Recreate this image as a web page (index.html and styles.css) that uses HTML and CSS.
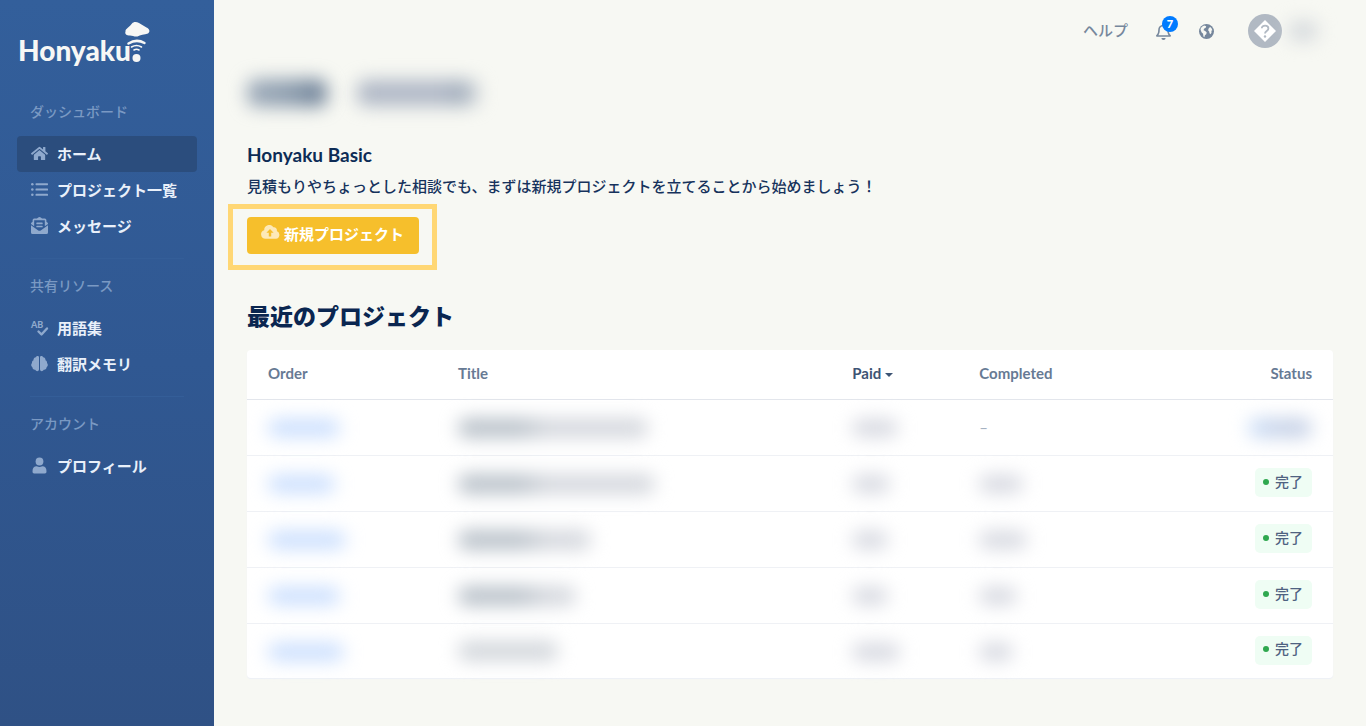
FILE: index.html
```html
<!DOCTYPE html>
<html lang="ja">
<head>
  <meta charset="UTF-8">
  <meta name="viewport" content="width=device-width, initial-scale=1.0">
  <title>Honyaku</title>
  <link rel="stylesheet" href="styles.css">
</head>
<body>
  <aside class="sidebar">
    <a class="logo" href="#" aria-label="Honyaku">
      <svg width="134" height="50" viewBox="0 0 134 50" fill="#f7f7f5">
        <text class="logo-text" x="-1" y="41">Honyaku</text>
        <path d="M106.500 11.500C106 9 111 6.500 113 3.500C114.500 1.500 117.500 1.500 120 3L127.500 7.500C130.500 8.500 131.500 12 129 13.500C125.500 14.500 121 15 118.500 16.500C115.500 17 113.500 15.500 111 15.500C107.500 15.500 105.500 14 106.500 11.500Z"/>
        <path d="M109.500 23.500Q117.500 18.500 125.500 23" fill="none" stroke="#f7f7f5" stroke-width="2.500" stroke-linecap="round"/>
        <path d="M112.500 27Q117.500 24 122.500 27" fill="none" stroke="#f7f7f5" stroke-width="1.500" stroke-linecap="round"/>
        <path d="M115 30Q117.500 28.500 120 30" fill="none" stroke="#f7f7f5" stroke-width="1.500" stroke-linecap="round"/>
        <circle cx="117.500" cy="38" r="4"/>
      </svg>
    </a>

    <nav class="nav">
      <div class="nav-section">
        <p class="nav-title">ダッシュボード</p>
        <a class="nav-link active" href="#">
          <svg class="icon" viewBox="0 0 576 512"><path d="M280.400 148.300L96 300.100V464a16 16 0 0 0 16 16l112-.3a16 16 0 0 0 15.900-16V368a16 16 0 0 1 16-16h64a16 16 0 0 1 16 16v95.600a16 16 0 0 0 16 16.100l112 .3a16 16 0 0 0 16-16V300L295.700 148.300a12.200 12.200 0 0 0-15.300 0zM571.600 251.500L488 182.600V44a12 12 0 0 0-12-12h-56a12 12 0 0 0-12 12v72.600L318.500 43a48 48 0 0 0-61 0L4.300 251.500a12 12 0 0 0-1.600 16.900l25.500 31a12 12 0 0 0 16.900 1.600L280.400 107.200a12.200 12.200 0 0 1 15.300 0L531 301a12 12 0 0 0 16.900-1.600l25.500-31a12 12 0 0 0-1.800-16.900z"/></svg>
          ホーム
        </a>
        <a class="nav-link" href="#">
          <svg class="icon" viewBox="0 0 512 512"><circle cx="40" cy="96" r="38"/><circle cx="40" cy="256" r="38"/><circle cx="40" cy="416" r="38"/><rect x="136" y="66" width="376" height="60" rx="18"/><rect x="136" y="226" width="376" height="60" rx="18"/><rect x="136" y="386" width="376" height="60" rx="18"/></svg>
          プロジェクト一覧
        </a>
        <a class="nav-link" href="#">
          <svg class="icon" viewBox="0 0 512 512"><path d="M176 216h160a16 16 0 0 0 16-16v-16a16 16 0 0 0-16-16H176a16 16 0 0 0-16 16v16a16 16 0 0 0 16 16zm-16 80a16 16 0 0 0 16 16h160a16 16 0 0 0 16-16v-16a16 16 0 0 0-16-16H176a16 16 0 0 0-16 16zm96 121.100c-16.400 0-32.800-5.100-46.900-15.200L0 250.900V464a48 48 0 0 0 48 48h416a48 48 0 0 0 48-48V250.900L302.900 401.900c-14 10.100-30.400 15.200-46.900 15.200zM493.600 163c-8.800-6.900-17.200-13.500-29.600-22.800V96a48 48 0 0 0-48-48h-77.600C321 34.800 288.300 0 256 0s-65 34.800-82.400 48H96a48 48 0 0 0-48 48v44.200C35.600 149.500 27.200 156 18.400 163A48 48 0 0 0 0 200.700v10.700l96 69.300V96h320v184.700l96-69.300v-10.700a48 48 0 0 0-18.400-37.700z"/></svg>
          メッセージ
        </a>
      </div>

      <div class="nav-section">
        <p class="nav-title">共有リソース</p>
        <a class="nav-link" href="#">
          <svg class="icon" viewBox="0 0 17 17"><text class="icon-letters" x="0" y="9">AB</text><path d="M7.500 12.500L10.500 15.500L16 9.500" fill="none" stroke="currentColor" stroke-width="2.400" stroke-linecap="round" stroke-linejoin="round"/></svg>
          用語集
        </a>
        <a class="nav-link" href="#">
          <svg class="icon" viewBox="0 0 17 17"><path d="M8 2.500C8 .800 5.500.500 4.900 2.300C3.300 2.500 2.300 3.800 2.500 5.200C1.200 5.900.800 7 1 8C-.2 9.200-.1 11.300 1.400 12.300C1.400 14 2.800 15.100 4.200 14.800C5.200 16.900 8 16.500 8 14.300ZM9 2.500C9 .800 11.500.500 12.100 2.300C13.700 2.500 14.700 3.800 14.500 5.200C15.800 5.900 16.200 7 16 8C17.200 9.200 17.100 11.300 15.600 12.300C15.600 14 14.200 15.100 12.800 14.800C11.800 16.900 9 16.500 9 14.300Z"/></svg>
          翻訳メモリ
        </a>
      </div>

      <div class="nav-section">
        <p class="nav-title">アカウント</p>
        <a class="nav-link" href="#">
          <svg class="icon" viewBox="0 0 17 17"><circle cx="8.500" cy="4.500" r="3.900"/><path d="M1.500 14.300C1.500 11 3 9.300 5.700 9.300C7.700 10.200 9.300 10.200 11.300 9.300C14 9.300 15.500 11 15.500 14.300C15.500 15.900 15 16.500 13.800 16.500H3.200C2 16.500 1.500 15.900 1.500 14.300Z"/></svg>
          プロフィール
        </a>
      </div>
    </nav>
  </aside>

  <div class="page">
    <header class="topbar">
      <a class="help" href="#">ヘルプ</a>
      <button class="icon-button bell" type="button" aria-label="通知">
        <svg width="15" height="17" viewBox="0 0 448 512" fill="currentColor"><path d="M439.400 362.300c-19.300-20.800-55.500-52-55.500-154.300 0-77.700-54.500-139.900-127.900-155.200V32a32 32 0 1 0-64 0v20.800C118.600 68.100 64.100 130.300 64.100 208c0 102.300-36.200 133.500-55.500 154.300A31.300 31.300 0 0 0 0 384c.1 16.400 13 32 32.100 32h383.800c19.100 0 32-15.600 32.100-32a31.300 31.300 0 0 0-8.600-21.700zM67.500 368c21.200-28 44.400-74.300 44.500-159.400V208a112 112 0 0 1 224 0v.6c.1 85.100 23.300 131.500 44.500 159.400zM224 512a64 64 0 0 0 64-64H160a64 64 0 0 0 64 64z"/></svg>
        <span class="badge">7</span>
      </button>
      <button class="icon-button" type="button" aria-label="言語">
        <svg width="15" height="15" viewBox="0 0 15 15"><circle cx="7.500" cy="7.500" r="7.500" fill="currentColor"/><path d="M1.500 5C2.200 3.300 3.700 2 5.300 1.600L7.200 2.300L6.700 3.700L5 4.800L4.600 6.300L6.200 7L7.700 8.400L7.200 10.200L5.900 11.200L5.400 13.200L4.400 12.400L4.100 9.800L2.700 8.600L1.900 6.800ZM10 4L11.200 3L12.500 4.300L13.400 6.200L12.400 6.700L12.500 8.800L11.500 10.300L10.500 9.200L10.200 7.600L9.200 6.600L9.400 4.900Z" fill="#f7f8f3"/></svg>
      </button>
      <button class="account" type="button" aria-label="アカウント">
        <svg width="34" height="34" viewBox="0 0 34 34"><circle cx="17" cy="17" r="17" fill="#b1b9c3"/><path d="M17 6L28 17L17 28L6 17Z" fill="#fff"/><path d="M13.800 14.200C13.800 10.800 20.400 10.800 20.400 14.400C20.400 17 17 16.800 17 19.500" fill="none" stroke="#b1b9c3" stroke-width="1.800"/><circle cx="17" cy="22.500" r="1.200" fill="#b1b9c3"/></svg>
        <span class="masked masked-user"></span>
      </button>
    </header>

    <main class="content">
      <div class="greeting">
        <span class="masked masked-name"></span>
        <span class="masked masked-welcome"></span>
      </div>

      <h1 class="plan">Honyaku Basic</h1>
      <p class="lead">見積もりやちょっとした相談でも、まずは新規プロジェクトを立てることから始めましょう！</p>
      <div class="highlight">
        <button class="new-project" type="button">
          <svg width="19" height="18" viewBox="0 0 19 18"><path fill="currentColor" fill-rule="evenodd" d="M15.800 6.100A3 3 0 0 0 12.400 2.300A5 5 0 0 0 3.200 5.200A4.400 4.400 0 0 0 4.500 13.800H15A4 4 0 0 0 15.800 6.100ZM9 4L12.600 7.700H10.200V11.400H7.800V7.700H5.400Z"/></svg>
          新規プロジェクト
        </button>
      </div>

      <h2 class="heading">最近のプロジェクト</h2>
      <table class="projects">
        <thead>
          <tr>
            <th class="col-order">Order</th>
            <th class="col-title">Title</th>
            <th class="col-paid sorted">Paid<span class="caret"></span></th>
            <th>Completed</th>
            <th class="col-status">Status</th>
          </tr>
        </thead>
        <tbody>
          <tr>
            <td><span class="masked masked-link" style="width: 72px"></span></td>
            <td><span class="masked masked-title" style="width: 190px"></span></td>
            <td><span class="masked masked-date" style="width: 46px"></span></td>
            <td class="empty">–</td>
            <td class="col-status"><span class="masked masked-status"></span></td>
          </tr>
          <tr>
            <td><span class="masked masked-link" style="width: 67px"></span></td>
            <td><span class="masked masked-title" style="width: 197px"></span></td>
            <td><span class="masked masked-date" style="width: 38px"></span></td>
            <td><span class="masked masked-date" style="width: 44px"></span></td>
            <td class="col-status"><span class="status">完了</span></td>
          </tr>
          <tr>
            <td><span class="masked masked-link" style="width: 78px"></span></td>
            <td><span class="masked masked-title" style="width: 133px"></span></td>
            <td><span class="masked masked-date" style="width: 36px"></span></td>
            <td><span class="masked masked-date" style="width: 48px"></span></td>
            <td class="col-status"><span class="status">完了</span></td>
          </tr>
          <tr>
            <td><span class="masked masked-link" style="width: 72px"></span></td>
            <td><span class="masked masked-title" style="width: 118px"></span></td>
            <td><span class="masked masked-date" style="width: 36px"></span></td>
            <td><span class="masked masked-date" style="width: 38px"></span></td>
            <td class="col-status"><span class="status">完了</span></td>
          </tr>
          <tr>
            <td><span class="masked masked-link" style="width: 76px"></span></td>
            <td><span class="masked masked-title light" style="width: 100px"></span></td>
            <td><span class="masked masked-date" style="width: 48px"></span></td>
            <td><span class="masked masked-date" style="width: 34px"></span></td>
            <td class="col-status"><span class="status">完了</span></td>
          </tr>
        </tbody>
      </table>
    </main>
  </div>
</body>
</html>
```
FILE: styles.css
```css
* {
  box-sizing: border-box;
}

body {
  display: flex;
  min-height: 100vh;
  margin: 0;
  background-color: #f7f8f3;
  color: #16325c;
  font-family: Lato, "Noto Sans CJK JP", sans-serif;
  font-size: 15px;
}

a {
  color: inherit;
  text-decoration: none;
}

button {
  padding: 0;
  border: none;
  background: none;
  color: inherit;
  font: inherit;
  cursor: pointer;
}

svg {
  display: block;
  flex: none;
}

/* Sidebar */

.sidebar {
  flex: none;
  width: 214px;
  padding: 20px 17px;
  background: linear-gradient(#335f9b, #305892 50%, #2f5185);
}

.logo {
  display: block;
  margin-left: 2px;
}

.logo svg {
  overflow: visible;
}

.logo-text {
  font-size: 28px;
  font-weight: 900;
}

.nav {
  padding-top: 32px;
}

.nav-section + .nav-section {
  margin-top: 14px;
}

.nav-section + .nav-section::before {
  content: "";
  display: block;
  height: 1px;
  margin: 0 13px 17px;
  background-color: #345e98;
}

.nav-title {
  margin: 0 13px 14px;
  color: #7a99c3;
  font-size: 14px;
  font-weight: 500;
  line-height: 20px;
}

.nav-link {
  display: flex;
  align-items: center;
  gap: 9px;
  height: 36px;
  padding: 0 14px 2px;
  border-radius: 4px;
  color: #e9f0fa;
  font-weight: 700;
  white-space: nowrap;
}

.nav-link.active {
  background-color: #2b4d7d;
}

.icon {
  width: 17px;
  height: 17px;
  overflow: visible;
  color: #8fa9cd;
  fill: currentColor;
}

.icon-letters {
  font-size: 9px;
  font-weight: 900;
}

/* Top bar */

.page {
  flex: 1;
  min-width: 0;
}

.topbar {
  display: flex;
  align-items: center;
  justify-content: flex-end;
  height: 62px;
  padding-right: 40px;
  color: #76879c;
}

.help {
  padding-bottom: 3px;
  font-weight: 500;
}

.icon-button {
  margin-left: 28px;
}

.bell {
  position: relative;
}

.badge {
  position: absolute;
  top: -7px;
  left: 6px;
  width: 16px;
  border-radius: 50%;
  background-color: #007bff;
  color: #fff;
  font-size: 11px;
  font-weight: 900;
  line-height: 16px;
  text-align: center;
}

.account {
  display: flex;
  align-items: center;
  gap: 6px;
  margin-left: 34px;
}

/* Private values are shown as a soft smudge */

.masked {
  display: inline-block;
  height: 18px;
  border-radius: 9px;
  filter: blur(9px);
  vertical-align: middle;
}

.masked-user {
  width: 30px;
  height: 20px;
  margin-right: 8px;
  background-color: #d6dadd;
}

.masked-name {
  width: 80px;
  height: 28px;
  background: linear-gradient(90deg, #9eabba, #8f9fb0 50%, #6b7e95);
}

.masked-welcome {
  width: 122px;
  height: 26px;
  background: linear-gradient(90deg, #b0b8c6 70%, #a0acbb 84%, #d0d5da);
}

.masked-link {
  background-color: #cbdffe;
}

.masked-title {
  height: 20px;
  background: linear-gradient(90deg, #bac2ca 60px, #d5d8de 90px);
}

.masked-title.light {
  background: #d3d7dc;
}

.masked-date {
  background-color: #d7d9e1;
}

.masked-status {
  width: 64px;
  height: 20px;
  background: linear-gradient(90deg, #cfe2fb, #c8d3e8 50%);
}

/* Content */

.content {
  padding: 0 33px 48px;
}

.greeting {
  display: flex;
  align-items: center;
  gap: 30px;
  height: 62px;
}

.plan {
  margin: 19px 0 0;
  color: #0d2c56;
  font-size: 19px;
  font-weight: 700;
  line-height: 24px;
}

.lead {
  margin: 7px 0 19px;
  font-weight: 500;
  line-height: 24px;
}

.highlight {
  position: relative;
  width: max-content;
}

.highlight::before {
  content: "";
  position: absolute;
  inset: -13px -18px -16px -19px;
  border: 5px solid #ffd774;
  pointer-events: none;
}

.new-project {
  display: flex;
  align-items: center;
  gap: 4px;
  height: 37px;
  padding: 0 15px 4px 14px;
  border-radius: 4px;
  background-color: #f6bf2c;
  color: #fff;
  font-weight: 700;
}

.new-project svg {
  color: #fde9b8;
}

.heading {
  margin: 46px 0 17px;
  color: #0a2650;
  font-size: 23px;
  font-weight: 900;
  line-height: 33px;
}

.projects {
  width: 100%;
  border-radius: 4px;
  border-spacing: 0;
  background-color: #fff;
  box-shadow: 0 1px 1px #edf0f7;
  table-layout: fixed;
}

.projects th {
  height: 50px;
  padding: 0 21px 3px;
  border-bottom: 1px solid #e3e6ec;
  color: #677a94;
  font-weight: 700;
  text-align: left;
}

.projects th.sorted {
  color: #3d5474;
}

.projects td {
  height: 56px;
  padding: 0 21px 2px;
  border-bottom: 1px solid #eff1f5;
  line-height: 20px;
}

.projects tr:last-child td {
  height: 54px;
  border-bottom: none;
}

.projects .col-order {
  width: 17.5%;
}

.projects .col-title {
  width: 36.3%;
}

.projects .col-paid {
  width: 11.7%;
}

.projects .col-status {
  text-align: right;
}

.projects .empty {
  color: #a5b2c2;
}

.caret {
  display: inline-block;
  margin-left: 4px;
  border: 4px solid transparent;
  border-top-color: currentColor;
  border-bottom: none;
  vertical-align: middle;
}

.status {
  display: inline-flex;
  align-items: center;
  gap: 6px;
  height: 29px;
  padding: 0 9px 2px 8px;
  border-radius: 5px;
  background-color: #effdf4;
  color: #4f6281;
  font-size: 14px;
  font-weight: 500;
  vertical-align: middle;
}

.status::before {
  content: "";
  width: 6px;
  height: 6px;
  border-radius: 50%;
  background-color: #2fa84f;
}
```
